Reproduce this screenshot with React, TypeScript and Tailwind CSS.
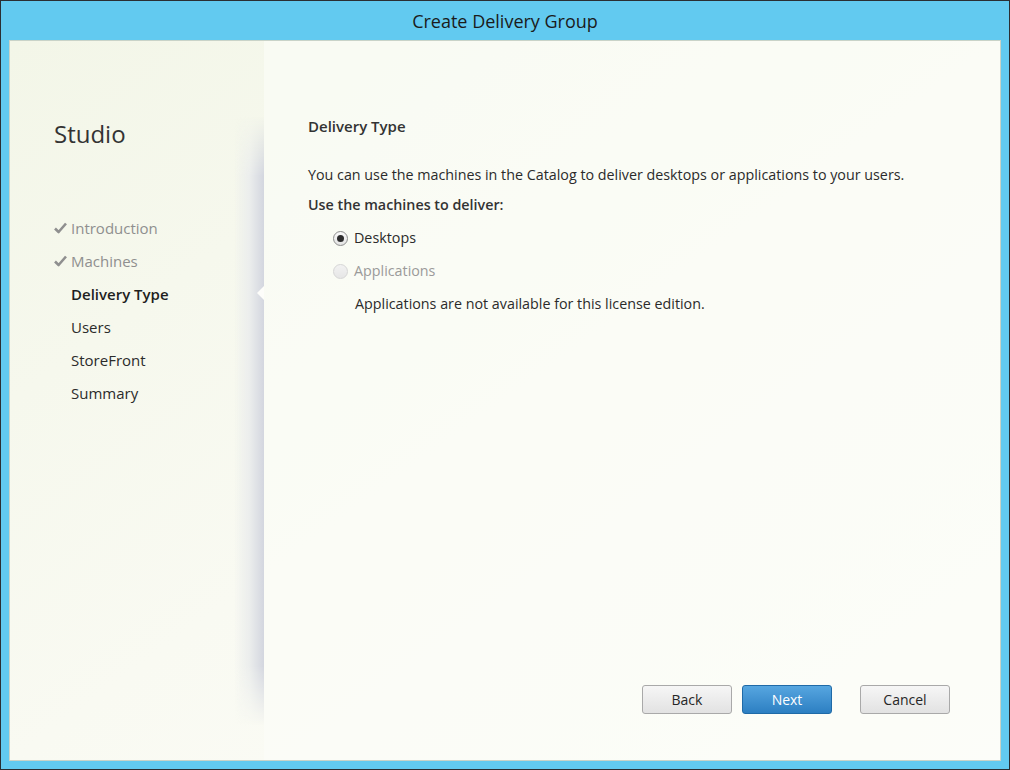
import React from 'react';

const FONT = "font-['Open_Sans','Noto_Sans',sans-serif]";

const steps = [
  { label: 'Introduction', done: true },
  { label: 'Machines', done: true },
  { label: 'Delivery Type', current: true },
  { label: 'Users' },
  { label: 'StoreFront' },
  { label: 'Summary' },
];

export default function App() {
  return (
    <div className={`flex h-[770px] w-[1010px] flex-col border border-[#2a2f33] bg-[#62caf0] ${FONT}`}>
      <div className="flex h-[39px] shrink-0 items-center justify-center pt-[1px] text-[18px] text-[#1b1b1b]">
        Create Delivery Group
      </div>

      <div className="mx-[8px] mb-[8px] flex flex-1 border border-[#c9d3c8] bg-gradient-to-br from-[#f3f6e8] via-[#f9faf2] to-[#fdfdf9]">
        <Sidebar />
        <Main />
      </div>
    </div>
  );
}

function Sidebar() {
  return (
    <div className="flex w-[254px] shrink-0">
      <div className="flex-1 pl-[44px] pt-[77px]">
        <div className="text-[24px] font-medium leading-[32px] text-[#333333]">Studio</div>
        <ul className="mt-[66px] space-y-[9px]">
          {steps.map((s) => (
            <li key={s.label} className="flex h-[24px] items-center text-[15px]">
              <span className="flex w-[17px] shrink-0 items-center">
                {s.done && <Check />}
              </span>
              <span
                className={
                  s.done
                    ? 'text-[#8f8f8f]'
                    : s.current
                      ? 'font-semibold text-[#1e1e1e]'
                      : 'text-[#2b2b2b]'
                }
              >
                {s.label}
              </span>
            </li>
          ))}
        </ul>
      </div>
      <div className="relative mb-[34px] mt-[75px] w-[30px] bg-gradient-to-r from-[#f6f8ee]/0 via-[#eceeed] to-[#d3d6df] [mask-image:linear-gradient(to_bottom,transparent,black_60px,black_calc(100%-60px),transparent)]">
        <svg className="absolute right-0 top-[170px]" width="7" height="14" viewBox="0 0 7 14">
          <path d="M7 0 L0 7 L7 14 Z" fill="#fdfdfa" />
        </svg>
      </div>
    </div>
  );
}

function Main() {
  return (
    <div className="flex flex-1 flex-col bg-[#fcfdf8]/60 pl-[44px] pr-[50px] pt-[74px] text-[14.3px] text-[#2b2b2b]">
      <div className="text-[15px] font-semibold leading-[22px] text-[#333333]">Delivery Type</div>
      <p className="mt-[28px] leading-[20px]">
        You can use the machines in the Catalog to deliver desktops or applications to your users.
      </p>
      <div className="mt-[10px] font-semibold leading-[20px] text-[#333333]">Use the machines to deliver:</div>
      <div className="ml-[25px] mt-[13px] flex items-center gap-[6px] leading-[20px]">
        <Radio checked />
        <span>Desktops</span>
      </div>
      <div className="ml-[25px] mt-[13px] flex items-center gap-[6px] leading-[20px] text-[#9a9a9a]">
        <Radio disabled />
        <span>Applications</span>
      </div>
      <div className="ml-[47px] mt-[13px] leading-[20px]">Applications are not available for this license edition.</div>

      <div className="mt-auto mb-[46px] flex justify-end">
        <Button>Back</Button>
        <Button primary className="ml-[10px]">Next</Button>
        <Button className="ml-[28px]">Cancel</Button>
      </div>
    </div>
  );
}

function Button({ children, primary, className }: { children: React.ReactNode; primary?: boolean; className?: string }) {
  return (
    <button
      type="button"
      className={`flex h-[29px] w-[90px] items-center justify-center rounded-[3px] border text-[14px] ${
        primary
          ? 'border-[#1f6aa7] bg-gradient-to-b from-[#56a6e0] to-[#2c7fc2] text-white'
          : 'border-[#a9a9a9] bg-gradient-to-b from-[#f6f6f6] to-[#e2e2e2] text-[#262626]'
      } ${className || ''}`}
    >
      {children}
    </button>
  );
}

function Radio({ checked, disabled }: { checked?: boolean; disabled?: boolean }) {
  return (
    <span
      className={`flex h-[15px] w-[15px] items-center justify-center rounded-full border ${
        disabled
          ? 'border-[#d6d6d6] bg-gradient-to-b from-[#f2f2f2] to-[#e6e6e6]'
          : 'border-[#8d8d8d] bg-gradient-to-b from-[#fafafa] to-[#e3e3e3]'
      }`}
    >
      {checked && <span className="h-[7px] w-[7px] rounded-full bg-[#2d2d2d]" />}
    </span>
  );
}

function Check() {
  return (
    <svg width="13" height="12" viewBox="0 0 13 12">
      <path d="M1 6.5 L4.6 10 L12 1.5" fill="none" stroke="#8f8f8f" strokeWidth="2.6" strokeLinejoin="round" />
    </svg>
  );
}
